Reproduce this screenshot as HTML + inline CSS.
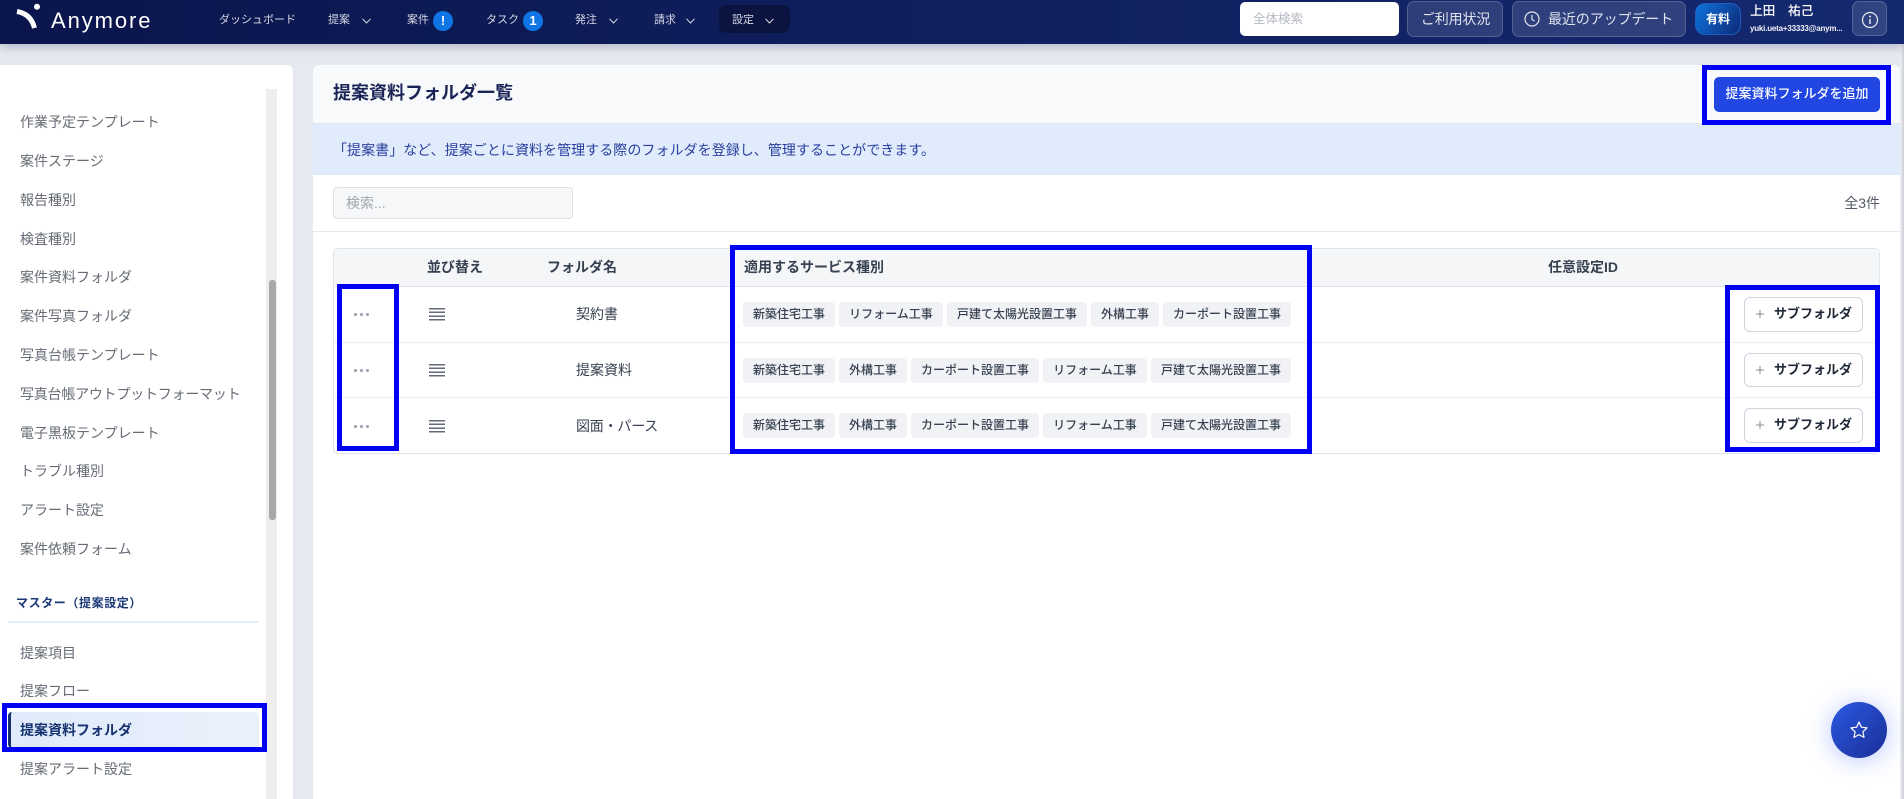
<!DOCTYPE html>
<html lang="ja"><head><meta charset="utf-8"><title>提案資料フォルダ一覧</title>
<style>
*{box-sizing:border-box}
html,body{margin:0;padding:0;width:1904px;height:799px;overflow:hidden}
body{position:relative;background:#e6e9f0;font-family:"Liberation Sans","Noto Sans CJK JP",sans-serif;color:#374151}
.a{position:absolute;white-space:nowrap}
.t{position:absolute;white-space:nowrap;line-height:20px;height:20px}
#hd{position:absolute;left:0;top:0;width:1904px;height:44px;background:linear-gradient(90deg,#0a154c,#152970);box-shadow:0 2px 10px rgba(30,40,90,.3);z-index:5}
.nav{font-size:11px;color:#d5d9e6}
.chev{position:absolute;width:9px;height:6px}
.bdg{position:absolute;top:11px;width:20px;height:20px;border-radius:50%;background:#0f74e4;color:#fff;font-size:13px;font-weight:700;text-align:center;line-height:20px}
.hb{position:absolute;top:1px;height:36px;border:1px solid rgba(255,255,255,.18);background:rgba(255,255,255,.12);border-radius:7px;color:#dfe3ee;font-size:14px;line-height:34px}
.side{font-size:14px;color:#666b75}
.bo{position:absolute;border:5px solid #0000f2;z-index:3;pointer-events:none}
.chip{position:absolute;height:25px;background:#f1f2f5;border-radius:4px;font-size:12px;font-weight:500;line-height:24px;text-align:center;color:#374151;white-space:nowrap}
.sub{position:absolute;left:1744px;width:119px;background:#fff;border:1px solid #cfd3dd;border-radius:6px;z-index:2}
.sub span{position:absolute;white-space:nowrap}
.dots{position:absolute;left:354px;width:16px;height:3px}
.dots i{position:absolute;top:0;width:3px;height:3px;border-radius:50%;background:#979eac}
.ham{position:absolute;left:429px;width:16px;height:12.5px;background:repeating-linear-gradient(#636a77 0 1.5px,transparent 1.5px 3.67px)}
.hr{position:absolute;left:334px;width:1545px;height:1px;background:#eceef1}
.th{font-size:14px;font-weight:700;color:#374151}
.td{font-size:14px;color:#374151}
</style></head><body>

<div id="hd">
<svg class="a" style="left:14px;top:2px" width="30" height="30" viewBox="0 0 30 30"><path d="M3 9.500C12 11 18 16 20.500 26" fill="none" stroke="#fff" stroke-width="5"/><circle cx="23" cy="4.700" r="3" fill="#fff"/></svg>
<div class="t" style="left:51px;top:9px;font-size:22px;color:#fff;letter-spacing:1.900px;line-height:24px;height:24px;font-family:'Liberation Sans',sans-serif">Anymore</div>

<div class="t nav" style="left:219px;top:10px">ダッシュボード</div>
<div class="t nav" style="left:328px;top:10px">提案</div>
<svg class="chev" style="left:362px;top:18px" viewBox="0 0 9 6"><path d="M.5.8 4.500 5 8.500.8" fill="none" stroke="#d5d9e6"/></svg>
<div class="t nav" style="left:407px;top:10px">案件</div><div class="bdg" style="left:433px">!</div>
<div class="t nav" style="left:486px;top:10px">タスク</div><div class="bdg" style="left:523px">1</div>
<div class="t nav" style="left:575px;top:10px">発注</div>
<svg class="chev" style="left:609px;top:18px" viewBox="0 0 9 6"><path d="M.5.8 4.500 5 8.500.8" fill="none" stroke="#d5d9e6"/></svg>
<div class="t nav" style="left:654px;top:10px">請求</div>
<svg class="chev" style="left:686px;top:18px" viewBox="0 0 9 6"><path d="M.5.8 4.500 5 8.500.8" fill="none" stroke="#d5d9e6"/></svg>
<div class="a" style="left:719px;top:5px;width:71px;height:28px;background:#0b1340;border-radius:7px"></div>
<div class="t nav" style="left:732px;top:10px">設定</div>
<svg class="chev" style="left:765px;top:18px" viewBox="0 0 9 6"><path d="M.5.8 4.500 5 8.500.8" fill="none" stroke="#d5d9e6"/></svg>

<div class="a" style="left:1240px;top:2px;width:159px;height:34px;background:#fff;border-radius:5px;font-size:12.500px;line-height:35px;padding-left:13px;color:#b4b8c2">全体検索</div>
<div class="hb" style="left:1407px;width:96px;padding-left:13px;letter-spacing:-.2px">ご利用状況</div>
<div class="hb" style="left:1512px;width:174px;padding-left:35px;letter-spacing:-.1px">最近のアップデート
<svg class="a" style="left:11px;top:9px" width="16" height="16" viewBox="0 0 16 16"><circle cx="8" cy="8" r="7" fill="none" stroke="#dfe3ee" stroke-width="1.200"/><path d="M8 4v4.500l2.500 1.500" fill="none" stroke="#dfe3ee" stroke-width="1.200"/></svg></div>
<div class="a" style="left:1695px;top:3px;width:46px;height:32px;border-radius:10px;background:linear-gradient(120deg,#0e72dd,#0d2a78);border:1px solid #1d5fc0;color:#fff;font-size:12px;font-weight:700;text-align:center;line-height:30px">有料</div>
<div class="t" style="left:1750px;top:1px;font-size:12.700px;color:#fff;font-weight:500">上田　祐己</div>
<div class="t" style="left:1750px;top:19px;font-size:8px;color:#eef0f6;font-weight:700;letter-spacing:-.2px">yuki.ueta+33333@anym...</div>
<div class="hb" style="left:1852px;width:35px;height:35px"></div>
<svg class="a" style="left:1860px;top:10px" width="20" height="20" viewBox="0 0 20 20"><circle cx="10" cy="10" r="7.500" fill="none" stroke="#e8ebf3" stroke-width="1.200"/><path d="M10 9v5" stroke="#e8ebf3" stroke-width="1.500"/><circle cx="10" cy="6.500" r="1" fill="#e8ebf3"/></svg>
</div>

<!-- sidebar -->
<div class="a" style="left:0;top:65px;width:293px;height:734px;background:#fff;border-radius:0 6px 0 0"></div>
<div class="a" style="left:266px;top:89px;width:11px;height:710px;background:#eeeeee"></div>
<div class="a" style="left:269px;top:280px;width:7px;height:240px;background:#a8a8a8;border-radius:3px"></div>
<div class="t side" style="left:20px;top:112px">作業予定テンプレート</div>
<div class="t side" style="left:20px;top:151px">案件ステージ</div>
<div class="t side" style="left:20px;top:190px">報告種別</div>
<div class="t side" style="left:20px;top:229px">検査種別</div>
<div class="t side" style="left:20px;top:267px">案件資料フォルダ</div>
<div class="t side" style="left:20px;top:306px">案件写真フォルダ</div>
<div class="t side" style="left:20px;top:345px">写真台帳テンプレート</div>
<div class="t side" style="left:20px;top:384px;letter-spacing:-.22px">写真台帳アウトプットフォーマット</div>
<div class="t side" style="left:20px;top:423px">電子黒板テンプレート</div>
<div class="t side" style="left:20px;top:461px">トラブル種別</div>
<div class="t side" style="left:20px;top:500px">アラート設定</div>
<div class="t side" style="left:20px;top:539px">案件依頼フォーム</div>
<div class="t" style="left:16px;top:593px;font-size:12px;font-weight:700;color:#1c3a78;letter-spacing:.6px">マスター（提案設定）</div>
<div class="a" style="left:8px;top:621px;width:250px;height:2px;background:#e1ebf9"></div>
<div class="t side" style="left:20px;top:643px">提案項目</div>
<div class="t side" style="left:20px;top:681px">提案フロー</div>
<div class="a" style="left:8px;top:712px;width:251px;height:36px;background:linear-gradient(90deg,#dfeafa,#eaf1fb);border-left:3px solid #14306f;border-radius:4px"></div>
<div class="t" style="left:20px;top:720px;font-size:14px;font-weight:700;color:#163270">提案資料フォルダ</div>
<div class="t side" style="left:20px;top:759px">提案アラート設定</div>
<div class="bo" style="left:2px;top:703px;width:265px;height:49px"></div>

<!-- main -->
<div class="a" style="left:313px;top:65px;width:1587px;height:734px;background:#fff;border-radius:6px 6px 0 0"></div>
<div class="a" style="left:313px;top:65px;width:1587px;height:59px;background:#f8f9fb;border-radius:6px 6px 0 0;border-bottom:1px solid #e2e5ea"></div>
<div class="t" style="left:333px;top:81px;font-size:18px;font-weight:700;color:#1a2456;line-height:24px;height:24px">提案資料フォルダ一覧</div>
<div class="a" style="left:1714px;top:77px;width:166px;height:35px;background:#2146e2;border-radius:5px;color:#fff;font-size:13px;font-weight:500;text-align:center;line-height:34px">提案資料フォルダを追加</div>
<div class="bo" style="left:1702px;top:65px;width:189px;height:60px"></div>
<div class="a" style="left:313px;top:124px;width:1587px;height:51px;background:#e0ebfc"></div>
<div class="t" style="left:333px;top:140px;font-size:14px;color:#2a3f9e;letter-spacing:.05px">「提案書」など、提案ごとに資料を管理する際のフォルダを登録し、管理することができます。</div>
<div class="a" style="left:333px;top:187px;width:240px;height:32px;background:#f6f7f9;border:1px solid #dfe1e6;border-radius:4px;font-size:14px;line-height:30px;padding-left:12px;color:#a0a4ad">検索...</div>
<div class="t" style="right:24px;top:193px;font-size:14px;color:#555b66">全3件</div>
<div class="a" style="left:313px;top:231px;width:1587px;height:1px;background:#e5e7eb"></div>

<!-- table -->
<div class="a" style="left:333px;top:248px;width:1547px;height:206px;border:1px solid #e0e3e8;border-radius:5px"></div>
<div class="a" style="left:334px;top:249px;width:1545px;height:38px;background:#f5f6f8;border-bottom:1px solid #dfe2e7;border-radius:5px 5px 0 0"></div>
<div class="hr" style="top:342px"></div><div class="hr" style="top:397px"></div>
<div class="t th" style="left:427px;top:257px">並び替え</div>
<div class="t th" style="left:547px;top:257px">フォルダ名</div>
<div class="t th" style="left:744px;top:257px">適用するサービス種別</div>
<div class="t th" style="left:1548px;top:257px">任意設定ID</div>

<div class="dots" style="top:313px"><i style="left:0"></i><i style="left:6px"></i><i style="left:12px"></i></div>
<div class="dots" style="top:369px"><i style="left:0"></i><i style="left:6px"></i><i style="left:12px"></i></div>
<div class="dots" style="top:425px"><i style="left:0"></i><i style="left:6px"></i><i style="left:12px"></i></div>
<div class="ham" style="top:308px"></div><div class="ham" style="top:364px"></div><div class="ham" style="top:420px"></div>
<div class="t td" style="left:576px;top:304px">契約書</div>
<div class="t td" style="left:576px;top:360px">提案資料</div>
<div class="t td" style="left:576px;top:416px;letter-spacing:-.2px">図面・パース</div>

<div class="chip" style="left:743px;top:302px;width:92px">新築住宅工事</div>
<div class="chip" style="left:839px;top:302px;width:104px">リフォーム工事</div>
<div class="chip" style="left:947px;top:302px;width:140px">戸建て太陽光設置工事</div>
<div class="chip" style="left:1091px;top:302px;width:68px">外構工事</div>
<div class="chip" style="left:1163px;top:302px;width:128px">カーポート設置工事</div>

<div class="chip" style="left:743px;top:358px;width:92px">新築住宅工事</div>
<div class="chip" style="left:839px;top:358px;width:68px">外構工事</div>
<div class="chip" style="left:911px;top:358px;width:128px">カーポート設置工事</div>
<div class="chip" style="left:1043px;top:358px;width:104px">リフォーム工事</div>
<div class="chip" style="left:1151px;top:358px;width:140px">戸建て太陽光設置工事</div>

<div class="chip" style="left:743px;top:413px;width:92px">新築住宅工事</div>
<div class="chip" style="left:839px;top:413px;width:68px">外構工事</div>
<div class="chip" style="left:911px;top:413px;width:128px">カーポート設置工事</div>
<div class="chip" style="left:1043px;top:413px;width:104px">リフォーム工事</div>
<div class="chip" style="left:1151px;top:413px;width:140px">戸建て太陽光設置工事</div>

<div class="sub" style="top:297px;height:35px"><svg class="a" style="left:10px;top:11px" width="10" height="10" viewBox="0 0 10 10"><path d="M5 1v8M1 5h8" stroke="#858b96"/></svg><span style="left:29px;top:7px;font-size:13px;font-weight:700;line-height:18px;color:#1f2937">サブフォルダ</span></div>
<div class="sub" style="top:353px;height:34px"><svg class="a" style="left:10px;top:11px" width="10" height="10" viewBox="0 0 10 10"><path d="M5 1v8M1 5h8" stroke="#858b96"/></svg><span style="left:29px;top:7px;font-size:13px;font-weight:700;line-height:18px;color:#1f2937">サブフォルダ</span></div>
<div class="sub" style="top:408px;height:35px"><svg class="a" style="left:10px;top:11px" width="10" height="10" viewBox="0 0 10 10"><path d="M5 1v8M1 5h8" stroke="#858b96"/></svg><span style="left:29px;top:7px;font-size:13px;font-weight:700;line-height:18px;color:#1f2937">サブフォルダ</span></div>

<div class="bo" style="left:337px;top:284px;width:62px;height:167px"></div>
<div class="bo" style="left:730px;top:245px;width:582px;height:209px"></div>
<div class="bo" style="left:1725px;top:285px;width:155px;height:167px"></div>

<!-- right scrollbar -->
<div class="a" style="left:1902px;top:44px;width:2px;height:755px;background:#d5d6da"></div>

<!-- FAB -->
<div class="a" style="left:1831px;top:702px;width:56px;height:56px;border-radius:50%;background:linear-gradient(135deg,#2b58e2,#1a2f96);box-shadow:0 2px 24px rgba(50,90,255,.35);z-index:4"></div>
<svg class="a" style="left:1849px;top:720px;z-index:4" width="20" height="20" viewBox="0 0 20 20"><path d="M10 2l2.400 5.200 5.600.700-4.100 3.900 1.100 5.600-5-2.800-5 2.800 1.100-5.600L2 7.900l5.600-.700z" fill="none" stroke="#fff" stroke-width="1.200" stroke-linejoin="round"/></svg>
</body></html>
